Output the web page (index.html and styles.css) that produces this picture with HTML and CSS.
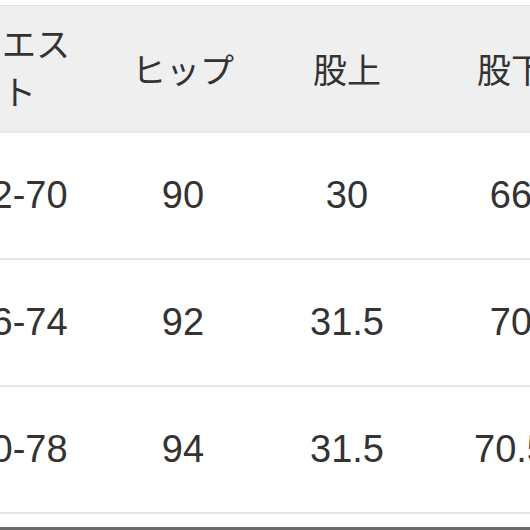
FILE: index.html
```html
<!DOCTYPE html>
<html lang="ja">
<head>
<meta charset="utf-8">
<link rel="stylesheet" href="styles.css">
</head>
<body>
<div class="page">
  <div class="table">
    <div class="row head">
      <div class="cell"><span class="wrap">ウエスト</span></div>
      <div class="cell">ヒップ</div>
      <div class="cell">股上</div>
      <div class="cell">股下</div>
    </div>
    <div class="row">
      <div class="cell">62-70</div>
      <div class="cell">90</div>
      <div class="cell">30</div>
      <div class="cell">66</div>
    </div>
    <div class="row">
      <div class="cell">66-74</div>
      <div class="cell">92</div>
      <div class="cell">31.5</div>
      <div class="cell">70</div>
    </div>
    <div class="row">
      <div class="cell">70-78</div>
      <div class="cell">94</div>
      <div class="cell">31.5</div>
      <div class="cell">70.5</div>
    </div>
  </div>
  <div class="bottom"></div>
</div>
</body>
</html>
```
FILE: styles.css
```css
html, body {
  margin: 0;
  padding: 0;
  background: #ffffff;
  overflow: hidden;
}
.page {
  width: 530px;
  height: 530px;
  overflow: hidden;
  display: flex;
  flex-direction: column;
  padding-top: 5px;
  box-sizing: border-box;
}
.table {
  margin-left: -63px;
  width: 656px;
  display: flex;
  flex-direction: column;
  font-family: "Liberation Sans", "Noto Sans CJK JP", sans-serif;
  color: #333333;
  border-top: 1px solid #e4e4e4;
}
.row {
  display: grid;
  grid-template-columns: repeat(4, 164px);
  height: 125px;
  border-bottom: 2px solid #e6e6e6;
  font-size: 38px;
}
.row.head {
  background: #efefef;
  font-size: 34px;
  height: 125px;
}
.cell {
  display: flex;
  align-items: center;
  justify-content: center;
  text-align: center;
  white-space: nowrap;
}
.wrap {
  white-space: normal;
  width: 102px;
  line-height: 48px;
}
.bottom {
  margin-top: auto;
  height: 3px;
  background: #6a6a6a;
}
```
